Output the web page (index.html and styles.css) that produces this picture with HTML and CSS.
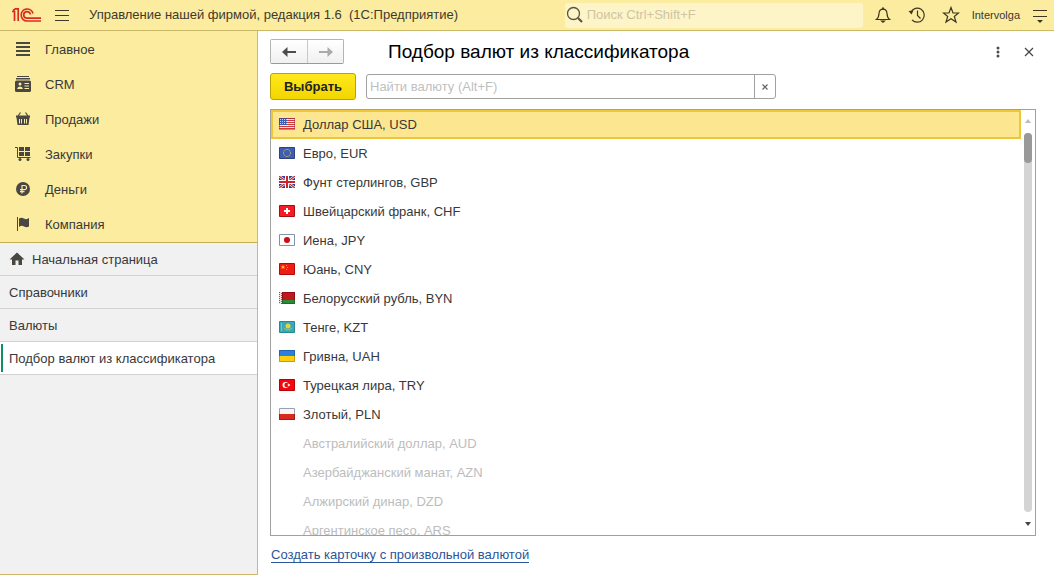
FILE: index.html
```html
<!DOCTYPE html>
<html lang="ru">
<head>
<meta charset="utf-8">
<title>Подбор валют из классификатора</title>
<link rel="stylesheet" href="styles.css">
</head>
<body>
<header class="topbar">
  <svg class="logo" viewBox="0 0 30 16" width="30" height="16" fill="none" stroke="#dc2a20">
    <path d="M0 4.500H2.500V14M1 3.500L3.500 1.800H6.200V14" stroke-width="1.700"/>
    <path d="M21 6.500A6 6 0 1 0 15 14H29M18.300 7.500A3.300 3.300 0 1 0 15 11.200H29" stroke-width="1.700"/>
  </svg>
  <button class="icon-btn menu-btn" aria-label="Меню">
    <svg viewBox="0 0 16 14" width="16" height="14" stroke="#3d3a2c"><path d="M1 2.500H15M1 7.500H15M1 12.500H15"/></svg>
  </button>
  <span class="app-name">Управление нашей фирмой, редакция 1.6&nbsp; (1С:Предприятие)</span>
  <label class="global-search">
    <svg viewBox="0 0 18 18" width="18" height="18" fill="none" stroke="#5a543c"><circle cx="7.500" cy="7.500" r="6" stroke-width="1.300"/><path d="M12 12L16 16" stroke-width="2.200"/></svg>
    <input type="text" placeholder="Поиск Ctrl+Shift+F" aria-label="Поиск">
  </label>
  <div class="tools">
    <button class="icon-btn" aria-label="Уведомления">
      <svg viewBox="0 0 18 18" width="18" height="18" fill="none" stroke="#3d3622" stroke-width="1.200"><path d="M2.500 13.500H15.500C13.500 12 13.200 10.500 13 7.500C12.800 4.500 11.500 3.200 9 3.200S5.200 4.500 5 7.500C4.800 10.500 4.500 12 2.500 13.500Z"/><path d="M8 2.500H10" stroke-width="2"/><path d="M6 14.500H12L9 17Z" fill="#3d3622" stroke="none"/></svg>
    </button>
    <button class="icon-btn" aria-label="История">
      <svg viewBox="0 0 18 18" width="18" height="18" fill="none" stroke="#3d3622" stroke-width="1.200"><path d="M3 6A7 7 0 1 1 4 13.800M9.500 4.500V9.500L12.500 12.500"/><path d="M.5 5L5.500 4.500L3.500 8.500Z" fill="#3d3622" stroke="none"/></svg>
    </button>
    <button class="icon-btn" aria-label="Избранное">
      <svg viewBox="0 0 18 18" width="18" height="18" fill="none" stroke="#3d3622" stroke-width="1.200"><path d="M9 1.500L11 7H16.500L12.300 10.500L14 16L9 12.700L4 16L5.700 10.500L1.500 7H7Z"/></svg>
    </button>
    <button class="user">Intervolga</button>
    <button class="icon-btn" aria-label="Настройки">
      <svg viewBox="0 0 16 18" width="16" height="18" stroke="#3d3622"><path d="M1 4.500H15M1 10.500H15"/><path d="M5 14H11L8 17Z" fill="#3d3622" stroke="none"/></svg>
    </button>
  </div>
</header>
<div class="body">
  <aside class="sidebar">
    <nav class="sections">
      <a href="#"><svg viewBox="0 0 16 16" width="16" height="16" stroke="#4a4742" stroke-width="2"><path d="M1 2H15M1 6H15M1 10H15M1 14H15"/></svg>Главное</a>
      <a href="#"><svg viewBox="0 0 16 16" width="16" height="16" fill="#4a4742"><path d="M2 0H14V1H2ZM1 2H15V3.500H1Z"/><rect y="4.500" width="16" height="11.500" rx="1.500"/><g fill="#fbec9f"><circle cx="5" cy="8" r="1.500"/><path d="M2 13Q2.500 10.500 5 10.500T8 13ZM9.500 7H14V8H9.500ZM9.500 9.500H14V10.500H9.500ZM9.500 12H14V13H9.500Z"/></g></svg>CRM</a>
      <a href="#"><svg viewBox="0 0 16 16" width="16" height="16" fill="#4a4742"><path d="M5.500 1.500L3 5M10.500 1.500L13 5" stroke="#4a4742" stroke-width="1.200"/><path d="M1 4.500H15V6.500H14.500L13.500 14H2.500L1.500 6.500H1Z"/><path d="M4.500 8V12.500M6.500 8V12.500M9.500 8V12.500M11.500 8V12.500" stroke="#fbec9f"/></svg>Продажи</a>
      <a href="#"><svg viewBox="0 0 16 16" width="16" height="16" fill="#4a4742"><path d="M0 1.500H2.500V11.500H15.500" fill="none" stroke="#4a4742"/><path d="M4 1H9V5H4ZM10 1H15V5H10ZM4 6H9V10H4ZM10 6H15V10H10Z"/><circle cx="5" cy="13.500" r="1.500"/><circle cx="13" cy="13.500" r="1.500"/></svg>Закупки</a>
      <a href="#"><svg viewBox="0 0 16 16" width="16" height="16"><circle cx="8" cy="8" r="7" fill="#4a4742"/><path d="M7 12.500V4.500H9.500A2 2 0 0 1 9.500 8.700H5M5 10.700H9.500" fill="none" stroke="#fbec9f" stroke-width="1.200"/></svg>Деньги</a>
      <a href="#"><svg viewBox="0 0 16 16" width="16" height="16" fill="#4a4742"><path d="M2 1H3V15H2ZM4 2.500Q6.500 1 9 2.500T14 2V10.500Q11.500 12 9 10.500T4 11Z"/></svg>Компания</a>
    </nav>
    <nav class="tabs">
      <a href="#" class="home"><svg viewBox="0 0 16 14" width="16" height="14" fill="#4a4742"><path d="M8 .5L15.500 7.500H13V13H9.500V8.500H6.500V13H3V7.500H.5Z"/></svg>Начальная страница</a>
      <a href="#">Справочники</a>
      <a href="#">Валюты</a>
      <a href="#" class="active" aria-current="page">Подбор валют из классификатора</a>
    </nav>
  </aside>
  <main class="content">
    <div class="title-row">
      <div class="history">
        <button aria-label="Назад"><svg viewBox="0 0 16 12" width="16" height="12"><path d="M1 6L6.500 1V5H15V7H6.500V11Z" fill="#4d4d4d"/></svg></button>
        <button aria-label="Вперед" disabled><svg viewBox="0 0 16 12" width="16" height="12"><path d="M15 6L9.500 1V5H1V7H9.500V11Z" fill="#aaa"/></svg></button>
      </div>
      <h1>Подбор валют из классификатора</h1>
      <button class="icon-btn" aria-label="Еще"><svg viewBox="0 0 4 12" width="4" height="12" fill="#4d4d4d"><circle cx="2" cy="2" r="1.500"/><circle cx="2" cy="6" r="1.500"/><circle cx="2" cy="10" r="1.500"/></svg></button>
      <button class="icon-btn" aria-label="Закрыть"><svg viewBox="0 0 10 10" width="10" height="10" stroke="#444" stroke-width="1.200"><path d="M1 1L9 9M9 1L1 9"/></svg></button>
    </div>
    <div class="command-row">
      <button class="primary">Выбрать</button>
      <div class="find">
        <input type="text" placeholder="Найти валюту (Alt+F)" aria-label="Найти валюту">
        <button aria-label="Очистить"><svg viewBox="0 0 8 8" width="8" height="8" stroke="#666" stroke-width="1.200"><path d="M1.500 1.500L6.500 6.500M6.500 1.500L1.500 6.500"/></svg></button>
      </div>
    </div>
    <div class="list-box">
      <ul class="currencies">
        <li class="selected"><svg viewBox="0 0 16 12" width="16" height="12"><path d="M0 0H16V12H0Z" fill="#f4e9e9"/><path d="M0 .5H16M0 2.500H16M0 4.500H16M0 6.500H16M0 8.500H16M0 10.500H16" stroke="#d0383c"/><path d="M0 0H8V7H0Z" fill="#3a5fae"/><path d="M1 1.500H8M1 3.500H8M1 5.500H8" stroke="#c3d2ee" stroke-dasharray="1 1"/><path d="M.5 .5H15.500V11.500H.5Z" fill="none" stroke="#7a2a50" stroke-opacity=".5"/></svg>Доллар США, USD</li>
        <li><svg viewBox="0 0 16 12" width="16" height="12"><path d="M.5 .5H15.500V11.500H.5Z" fill="#3f5db3" stroke="#2b4384"/><circle cx="8" cy="6" r="3.500" fill="none" stroke="#d2bd55" stroke-dasharray="1.200 .63"/></svg>Евро, EUR</li>
        <li><svg viewBox="0 0 16 12" width="16" height="12"><path d="M0 0H16V12H0Z" fill="#2d3f8a"/><path d="M0 0L16 12M16 0L0 12" stroke="#fff" stroke-width="2.500"/><path d="M0 0L16 12M16 0L0 12" stroke="#c9242b" stroke-width="1.200"/><path d="M8 0V12M0 6H16" stroke="#fff" stroke-width="4"/><path d="M8 0V12M0 6H16" stroke="#c9242b" stroke-width="2"/></svg>Фунт стерлингов, GBP</li>
        <li><svg viewBox="0 0 16 12" width="16" height="12"><path d="M.5 .5H15.500V11.500H.5Z" fill="#f51d23" stroke="#a80d14"/><path d="M8 3V9M5 6H11" stroke="#fff" stroke-width="2"/></svg>Швейцарский франк, CHF</li>
        <li><svg viewBox="0 0 16 12" width="16" height="12"><path d="M.5 .5H15.500V11.500H.5Z" fill="#fff" stroke="#8292a8"/><circle cx="8" cy="6" r="3" fill="#d00a12"/></svg>Иена, JPY</li>
        <li><svg viewBox="0 0 16 12" width="16" height="12"><path d="M.5 .5H15.500V11.500H.5Z" fill="#f01c12" stroke="#b00b0b"/><path d="M4 2L4.700 3.500H6L5 4.500L5.500 6L4 5L2.500 6L3 4.500L2 3.500H3.300Z" fill="#fbd62c"/><path d="M7 2H8V3H7ZM8 4H9V5H8ZM7 6H8V7H7Z" fill="#f5a51c"/></svg>Юань, CNY</li>
        <li><svg viewBox="0 0 16 12" width="16" height="12"><path d="M0 0H16V8H0Z" fill="#c5161d"/><path d="M0 8H16V12H0Z" fill="#2c8a36"/><path d="M0 0H3V12H0Z" fill="#f0dede"/><path d="M.5 0V12M2.500 1V12" stroke="#b8404a" stroke-dasharray="1 1"/><path d="M3.500 8V.5H15.500V8" fill="none" stroke="#8a1018"/><path d="M3.500 8V11.500H15.500V8" fill="none" stroke="#1f6a28"/></svg>Белорусский рубль, BYN</li>
        <li><svg viewBox="0 0 16 12" width="16" height="12"><path d="M.5 .5H15.500V11.500H.5Z" fill="#3ba8b8" stroke="#2b8793"/><circle cx="9" cy="5" r="2.500" fill="#e0d33c"/><path d="M5 7Q9 11 13 7M2.500 2V10" fill="none" stroke="#a9c35a"/></svg>Тенге, KZT</li>
        <li><svg viewBox="0 0 16 12" width="16" height="12"><path d="M0 0H16V6H0Z" fill="#2a7fe0"/><path d="M0 6H16V12H0Z" fill="#fdcf0c"/><path d="M.5 6V.5H15.500V6" fill="none" stroke="#2163ad"/><path d="M.5 6V11.500H15.500V6" fill="none" stroke="#c89a0c"/></svg>Гривна, UAH</li>
        <li><svg viewBox="0 0 16 12" width="16" height="12"><path d="M.5 .5H15.500V11.500H.5Z" fill="#f5060e" stroke="#b50208"/><circle cx="6.500" cy="6" r="3" fill="#fff"/><circle cx="7.500" cy="6" r="2.200" fill="#f5060e"/><path d="M8 6L9.300 5.500V4.300L10 5.300L11.300 5L10.500 6L11.300 7L10 6.700L9.300 7.700V6.500Z" fill="#fff"/></svg>Турецкая лира, TRY</li>
        <li><svg viewBox="0 0 16 12" width="16" height="12"><path d="M0 0H16V6H0Z" fill="#f6f6f8"/><path d="M0 6H16V12H0Z" fill="#d92a20"/><path d="M.5 6V.5H15.500V6" fill="none" stroke="#9aa0ae"/><path d="M.5 6V11.500H15.500V6" fill="none" stroke="#a01a18"/></svg>Злотый, PLN</li>
        <li class="unused">Австралийский доллар, AUD</li>
        <li class="unused">Азербайджанский манат, AZN</li>
        <li class="unused">Алжирский динар, DZD</li>
        <li class="unused">Аргентинское песо, ARS</li>
      </ul>
      <div class="scrollbar" aria-hidden="true">
        <svg viewBox="0 0 8 4" width="8" height="4"><path d="M1 4L4 0L7 4Z" fill="#bbb"/></svg>
        <div class="track"><div class="thumb"></div></div>
        <svg viewBox="0 0 8 4" width="8" height="4"><path d="M1 0H7L4 4Z" fill="#444"/></svg>
      </div>
    </div>
    <a href="#" class="create-link">Создать карточку с произвольной валютой</a>
  </main>
</div>
</body>
</html>
```

FILE: styles.css
```css
* { box-sizing: border-box; }

body {
  margin: 0;
  height: 100vh;
  display: flex;
  flex-direction: column;
  font: 13px/16px "Liberation Sans", Arial, sans-serif;
  color: #38383a;
  background: #fff;
}

svg { flex: none; display: block; }
a { color: inherit; text-decoration: none; }
button, input { font: inherit; color: inherit; }
button { padding: 0; cursor: pointer; }
input { min-width: 0; outline: none; }
input::placeholder { color: #bfbfbf; opacity: 1; }

.icon-btn {
  display: flex;
  align-items: center;
  border: 0;
  background: none;
}

.topbar {
  flex: none;
  height: 31px;
  display: flex;
  align-items: center;
  padding: 0 6px 0 12px;
  background: #fbec9f;
  border-bottom: 1px solid #c9b865;
}
.menu-btn { margin-left: 12px; }
.app-name { margin-left: 19px; color: #3d3a2c; white-space: nowrap; }

.global-search {
  width: 298px;
  height: 25px;
  margin-left: auto;
  display: flex;
  align-items: center;
  gap: 3px;
  padding-left: 1px;
  border-radius: 3px;
  background: #fdf4c8;
}
.global-search input { flex: 1; border: 0; padding: 0; background: none; }
.global-search input::placeholder { color: #cdc5a3; }

.tools { display: flex; align-items: center; gap: 16px; margin-left: 11px; }
.user {
  margin: 0 -4px;
  border: 0;
  background: none;
  font-size: 11px;
}

.body { flex: 1; min-height: 0; display: flex; }

.sidebar {
  width: 258px;
  flex: none;
  border-right: 1px solid #cdb967;
  border-bottom: 1px solid #cdb967;
  background: #f1f1f1;
}
.sections {
  padding-top: 1px;
  background: #fbec9f;
  border-bottom: 1px solid #c4ae58;
}
.sections a {
  height: 35px;
  display: flex;
  align-items: center;
  gap: 14px;
  padding-left: 15px;
}
.tabs a {
  height: 33px;
  display: flex;
  align-items: center;
  gap: 7px;
  padding: 2px 0 0 9px;
  border-bottom: 1px solid #d2d2d2;
}
.sections svg, .tabs svg, .currencies svg { margin-bottom: 2px; }
.tabs .active {
  background: linear-gradient(#109060, #109060) 1px 2px / 2px 28px no-repeat #fff;
}

.content {
  flex: 1;
  min-width: 0;
  display: flex;
  flex-direction: column;
  padding: 8px 18px 12px 12px;
}

.title-row { display: flex; align-items: center; gap: 24px; height: 25px; padding-right: 2px; }
.title-row h1 {
  flex: 1;
  margin: 0 0 0 20px;
  font-size: 19px;
  line-height: 24px;
  font-weight: 400;
  color: #000;
}
.title-row .icon-btn { height: 22px; }
.history { display: flex; border: 1px solid #b4b4b4; border-bottom-color: #999; border-radius: 2px; }
.history button {
  width: 36px;
  height: 23px;
  display: flex;
  align-items: center;
  justify-content: center;
  border: 0;
  background: linear-gradient(#fff, #f0f0f0);
}
.history button + button { border-left: 1px solid #c8c8c8; }

.command-row { display: flex; align-items: center; gap: 10px; margin-top: 9px; }
.primary {
  width: 86px;
  height: 27px;
  border: 1px solid #b8a20a;
  border-radius: 3px;
  background: linear-gradient(#ffe81c, #f2d600);
  font-weight: 700;
  color: #222;
}
.find {
  width: 410px;
  height: 25px;
  display: flex;
  border: 1px solid #a0a0a0;
  border-radius: 3px;
}
.find input { flex: 1; border: 0; padding: 0 3px; background: none; }
.find button {
  width: 21px;
  display: flex;
  align-items: center;
  justify-content: center;
  border: 0;
  border-left: 1px solid #a0a0a0;
  background: none;
}

.list-box {
  flex: 1;
  min-height: 0;
  display: flex;
  margin-top: 9px;
  border: 1px solid #a0a0a0;
}
.currencies {
  flex: 1;
  margin: 0;
  padding: 0;
  list-style: none;
  overflow: hidden;
}
.currencies li {
  height: 29px;
  display: flex;
  align-items: center;
  gap: 8px;
  padding-left: 8px;
}
.currencies .selected {
  padding-left: 6px;
  border: 2px solid #edc63a;
  background: #fce68f;
}
.currencies .unused { padding-left: 32px; color: #bdbdbd; }

.scrollbar {
  width: 14px;
  flex: none;
  display: flex;
  flex-direction: column;
  align-items: center;
  gap: 10px;
  padding: 9px 0;
}
.track { flex: 1; width: 8px; border-radius: 4px; background: #d4d4d4; }
.thumb { height: 30px; border-radius: 4px; background: #999; }

.create-link {
  align-self: flex-start;
  margin: 11px 0 0 1px;
  border-bottom: 1px solid #2a5699;
  line-height: 15px;
  color: #2a5699;
}
```
